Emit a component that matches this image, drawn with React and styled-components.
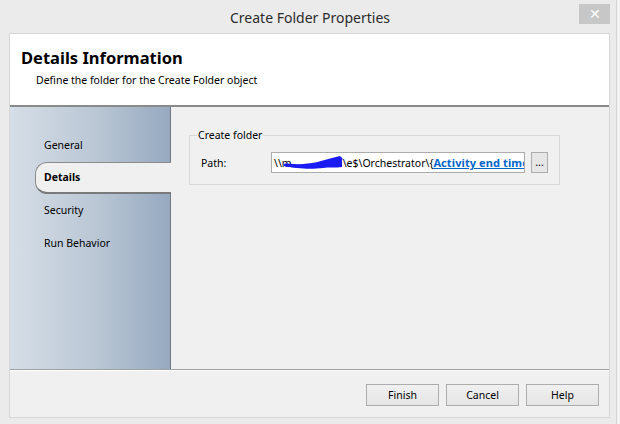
import React from 'react';
import styled, { createGlobalStyle } from 'styled-components';

const GlobalStyle = createGlobalStyle`
  html, body {
    margin: 0;
    padding: 0;
    background: #f4f4f4;
  }
  body {
    font-family: "Noto Sans", "Open Sans", sans-serif;
    font-size: 10.5px;
    color: #000;
  }
`;

const Window = styled.div`
  width: 617px;
  height: 424px;
  box-sizing: border-box;
  background: #ebebeb;
  border-right: 1px solid #d4d4d4;
  display: flex;
  flex-direction: column;
`;

const TitleBar = styled.div`
  height: 33px;
  display: grid;
  grid-template-columns: 1fr auto 1fr;
  align-items: start;
`;

const Title = styled.div`
  grid-column: 2;
  padding: 8px 0 0 4px;
  font-size: 14px;
  color: #2b2b2b;
  line-height: 20px;
`;

const CloseButton = styled.div`
  grid-column: 3;
  justify-self: end;
  margin: 4px 6px 0 0;
  width: 31px;
  height: 20px;
  background: #c7c7c7;
  color: #fff;
  font-size: 14px;
  line-height: 20px;
  text-align: center;
`;

const Body = styled.div`
  flex: 1;
  margin: 0 6px 6px 9px;
  border: 1px solid #d6d6d6;
  display: flex;
  flex-direction: column;
  background: #f0f0f0;
`;

const Header = styled.div`
  height: 73px;
  background: #fff;
  border-bottom: 2px solid #8a8a8a;
  padding: 12px 0 0 11px;
  box-sizing: border-box;
  h1 {
    margin: 0;
    font-size: 16.5px;
    font-weight: bold;
    line-height: 24px;
  }
  p {
    margin: 2px 0 0 15px;
    font-size: 10.5px;
    line-height: 16px;
  }
`;

const Middle = styled.div`
  display: flex;
  height: 262px;
`;

const Nav = styled.div`
  width: 161px;
  box-sizing: border-box;
  background: linear-gradient(90deg, #d6dee7 0%, #b9c6d4 55%, #96a9c0 100%);
  border-right: 1px solid #6f7780;
  padding-top: 22px;
  display: flex;
  flex-direction: column;
`;

const NavItem = styled.div`
  height: 32.5px;
  box-sizing: border-box;
  margin-left: 25px;
  padding-left: 9px;
  display: flex;
  align-items: center;
  font-weight: ${p => (p.$active ? 'bold' : 'normal')};
  ${p =>
    p.$active &&
    `
    background: #f0f0f0;
    border: 1px solid #8c8c8c;
    border-right: none;
    border-bottom: 2px solid #7a7a7a;
    border-radius: 12px 0 0 12px;
    margin-right: -1px;
    padding-left: 8px;
  `}
`;

const Main = styled.div`
  flex: 1;
  padding: 21px 0 0 18px;
`;

const GroupBox = styled.fieldset`
  width: 371px;
  height: 57px;
  box-sizing: border-box;
  margin: 0;
  padding: 10px 0 0 11px;
  border: 1px solid #d8d8d8;
  border-radius: 0;
  legend {
    padding: 0 1px;
    margin-left: -4px;
    line-height: 14px;
  }
`;

const Row = styled.div`
  display: flex;
  align-items: center;
`;

const Label = styled.div`
  width: 70px;
`;

const PathInput = styled.div`
  width: 254px;
  height: 21px;
  box-sizing: border-box;
  border: 1px solid #acacac;
  background: #fff;
  padding-left: 2px;
  white-space: nowrap;
  overflow: hidden;
  line-height: 19px;
`;

const Scribble = styled.span`
  display: inline-block;
  width: 51px;
  height: 19px;
  vertical-align: top;
  position: relative;
  svg {
    position: absolute;
    left: -9px;
    top: 2px;
  }
`;

const Link = styled.span`
  color: #0066cc;
  font-weight: bold;
  font-size: 11px;
  letter-spacing: 0.1px;
  text-decoration: underline;
`;

const BrowseButton = styled.div`
  margin-left: 6px;
  width: 17px;
  height: 21px;
  box-sizing: border-box;
  border: 1px solid #acacac;
  background: #e6e6e6;
  line-height: 19px;
  text-align: center;
`;

const Footer = styled.div`
  flex: 1;
  border-top: 1px solid #a0a0a0;
  box-shadow: inset 0 1px 0 #fff;
  display: flex;
  justify-content: flex-end;
  align-items: flex-start;
  gap: 7px;
  padding: 14px 10px 0 0;
`;

const Button = styled.div`
  width: 73px;
  height: 22px;
  box-sizing: border-box;
  border: 1px solid #adadad;
  background: linear-gradient(#f0f0f0, #e5e5e5);
  line-height: 20px;
  text-align: center;
`;

const navItems = ['General', 'Details', 'Security', 'Run Behavior'];

export default function App() {
  return (
    <>
      <GlobalStyle />
      <Window>
        <TitleBar>
          <Title>Create Folder Properties</Title>
          <CloseButton>✕</CloseButton>
        </TitleBar>
        <Body>
          <Header>
            <h1>Details Information</h1>
            <p>Define the folder for the Create Folder object</p>
          </Header>
          <Middle>
            <Nav>
              {navItems.map(item => (
                <NavItem key={item} $active={item === 'Details'}>
                  {item}
                </NavItem>
              ))}
            </Nav>
            <Main>
              <GroupBox>
                <legend>Create folder</legend>
                <Row>
                  <Label>Path:</Label>
                  <PathInput>
                    {'\\\\m'}
                    <Scribble>
                      <svg width="60" height="16" viewBox="0 0 60 16">
                        <path
                          d="M1 9 C8 8 14 10 20 9 C26 8 32 8 38 6 C44 4 50 3 57 1 L59 3 L59 12 C52 13 46 12 40 13 C32 14 22 14 14 13 C8 12 4 12 1 11 Z"
                          fill="#1a1af2"
                        />
                        <path
                          d="M3 10 C14 12 28 11 40 9 C48 8 53 6 58 4"
                          stroke="#1a1af2"
                          strokeWidth="3"
                          fill="none"
                          strokeLinecap="round"
                        />
                      </svg>
                    </Scribble>
                    {'\\e$\\Orchestrator\\{'}
                    <Link>Activity end time</Link>
                  </PathInput>
                  <BrowseButton>...</BrowseButton>
                </Row>
              </GroupBox>
            </Main>
          </Middle>
          <Footer>
            <Button>Finish</Button>
            <Button>Cancel</Button>
            <Button>Help</Button>
          </Footer>
        </Body>
      </Window>
    </>
  );
}
